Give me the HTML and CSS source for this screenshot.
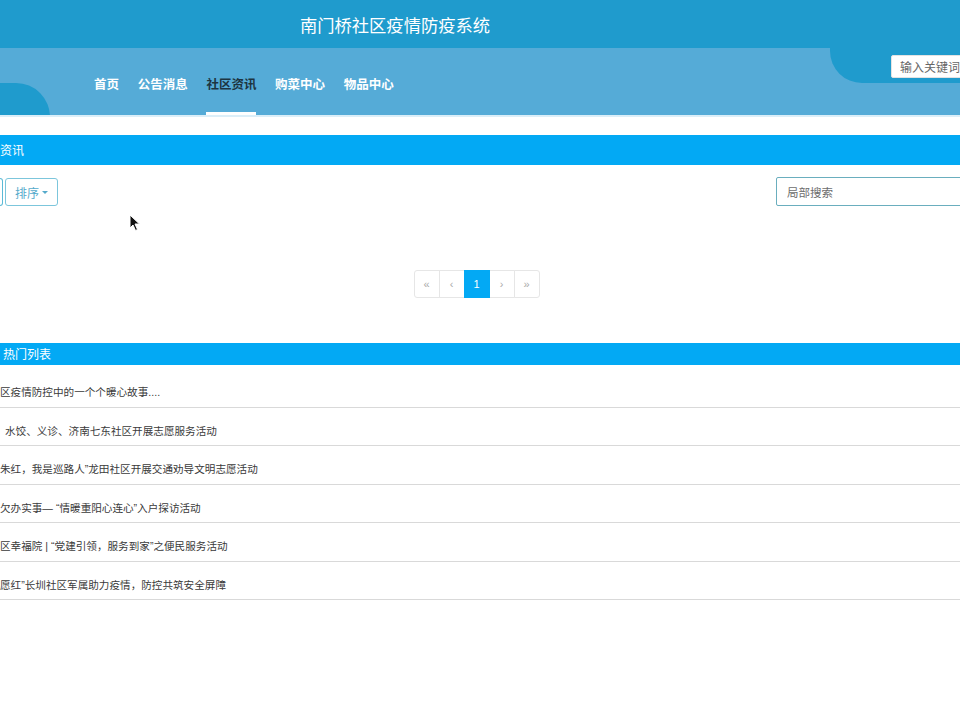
FILE: index.html
```html
<!DOCTYPE html>
<html lang="zh-CN">
<head>
<meta charset="utf-8">
<title>南门桥社区疫情防疫系统</title>
<link rel="stylesheet" href="styles.css">
</head>
<body>
<header class="topbar">
  <h1 class="site-title">南门桥社区疫情防疫系统</h1>
</header>
<nav class="navbar">
  <div class="deco deco-left"></div>
  <div class="deco deco-right">
    <input class="key-search" type="text" placeholder="输入关键词">
  </div>
  <ul class="menu">
    <li class="menu-item">首页</li>
    <li class="menu-item">公告消息</li>
    <li class="menu-item active">社区资讯</li>
    <li class="menu-item">购菜中心</li>
    <li class="menu-item">物品中心</li>
  </ul>
</nav>
<main class="content">
  <div class="section-bar">资讯</div>
  <div class="toolbar">
    <span class="btn-edge"></span>
    <button class="btn-sort">排序<span class="caret"></span></button>
    <input class="local-search" type="text" placeholder="局部搜索">
  </div>
  <div class="pager-wrap">
    <ul class="pager">
      <li class="page">«</li>
      <li class="page">‹</li>
      <li class="page current">1</li>
      <li class="page">›</li>
      <li class="page">»</li>
    </ul>
  </div>
  <div class="hot-bar">热门列表</div>
  <ul class="hot-list">
    <li class="hot-item">区疫情防控中的一个个暖心故事....</li>
    <li class="hot-item indent">水饺、义诊、济南七东社区开展志愿服务活动</li>
    <li class="hot-item">朱红，我是巡路人”龙田社区开展交通劝导文明志愿活动</li>
    <li class="hot-item">欠办实事— “情暖重阳心连心”入户探访活动</li>
    <li class="hot-item">区幸福院 | “党建引领，服务到家”之便民服务活动</li>
    <li class="hot-item">愿红”长圳社区军属助力疫情，防控共筑安全屏障</li>
  </ul>
  <svg class="cursor" width="12" height="18" viewBox="0 0 12 18"><path d="M1 1 L1 14 L4 11 L6.5 16.5 L8.5 15.5 L6 10 L10.5 10 Z" fill="#111" stroke="#fff" stroke-width="1"/></svg>
</main>
</body>
</html>
```
FILE: styles.css
```css
* { box-sizing: border-box; }
html, body { margin: 0; padding: 0; }
body {
  font-family: "Liberation Sans", "Noto Sans CJK SC", sans-serif;
  background: #fff;
  color: #333;
  overflow-x: hidden;
  width: 960px;
  min-height: 720px;
}
.topbar {
  height: 48px;
  background: #1f9bcd;
  display: flex;
  align-items: center;
  justify-content: center;
}
.site-title {
  margin: 0;
  font-size: 17.3px;
  font-weight: normal;
  color: #fff;
  transform: translateX(-85px);
}
.navbar {
  position: relative;
  height: 69px;
  background: #55abd7;
  border-bottom: 2px solid #dbeef8;
  overflow: hidden;
}
.deco { position: absolute; background: #1f9bcd; }
.deco-left {
  left: -20px;
  top: 35px;
  width: 70px;
  height: 40px;
  border-top-right-radius: 34px;
}
.deco-right {
  right: 0;
  top: 0;
  width: 130px;
  height: 35px;
  border-bottom-left-radius: 32px;
  display: flex;
  align-items: flex-start;
  padding-left: 61px;
  padding-top: 7px;
}
.key-search {
  width: 90px;
  height: 23px;
  flex: none;
  border: 1px solid #e3e3e3;
  border-radius: 2px;
  background: #fff;
  padding: 0 8px;
  font-family: "Noto Sans CJK SC", sans-serif;
  font-size: 12px;
  color: #666;
  outline: none;
}
.key-search::placeholder { color: #666; }
.menu {
  position: relative;
  list-style: none;
  margin: 0;
  padding: 0 0 0 94px;
  display: flex;
  height: 67px;
}
.menu-item {
  font-family: "Noto Sans CJK SC", sans-serif;
  font-size: 12.5px;
  font-weight: bold;
  color: #fff;
  margin-right: 18.7px;
  height: 67px;
  line-height: 14px;
  padding-top: 29px;
  white-space: nowrap;
}
.menu-item.active {
  color: #1d3441;
  border-bottom: 3px solid #fff;
}
.content {
  position: relative;
  padding-top: 18px;
}
.section-bar {
  height: 30px;
  background: #03a9f4;
  color: #fff;
  font-family: "Noto Sans CJK SC", sans-serif;
  font-size: 12px;
  line-height: 30px;
}
.toolbar {
  display: flex;
  align-items: flex-start;
  margin-top: 12px;
  height: 30px;
}
.btn-edge {
  width: 3px;
  height: 28px;
  margin-top: 1px;
  border: 1px solid #5bbad6;
  border-left: none;
  border-radius: 0 3px 3px 0;
}
.btn-sort {
  margin-left: 2px;
  margin-top: 1px;
  width: 53px;
  height: 28px;
  border: 1px solid #7cc6dc;
  border-radius: 3px;
  background: #fff;
  color: #55aacb;
  font-family: "Noto Sans CJK SC", sans-serif;
  font-size: 12px;
  padding: 0 0 0 9px;
  display: flex;
  align-items: center;
}
.caret {
  display: inline-block;
  width: 0;
  height: 0;
  margin-left: 3px;
  border-left: 3px solid transparent;
  border-right: 3px solid transparent;
  border-top: 3px solid #55aacb;
}
.local-search {
  margin-left: auto;
  margin-right: -30px;
  width: 214px;
  height: 29px;
  border: 1px solid #6aaebe;
  border-radius: 2px;
  padding: 0 10px;
  font-family: "Noto Sans CJK SC", sans-serif;
  font-size: 11.5px;
  color: #666;
  outline: none;
}
.local-search::placeholder { color: #6d6d6d; }
.pager-wrap {
  display: flex;
  justify-content: center;
  padding-right: 7px;
  margin-top: 63px;
}
.pager {
  list-style: none;
  margin: 0;
  padding: 0;
  display: flex;
}
.page {
  width: 26px;
  height: 28px;
  border: 1px solid #e6e6e6;
  margin-left: -1px;
  display: flex;
  align-items: center;
  justify-content: center;
  font-size: 11px;
  color: #aaa;
  background: #fff;
}
.page:first-child { border-radius: 3px 0 0 3px; margin-left: 0; }
.page:last-child { border-radius: 0 3px 3px 0; }
.page.current {
  background: #03a9f4;
  border-color: #03a9f4;
  color: #fff;
  position: relative;
}
.hot-bar {
  margin-top: 45px;
  height: 22px;
  background: #03a9f4;
  color: #fff;
  font-family: "Noto Sans CJK SC", sans-serif;
  font-size: 12px;
  line-height: 22px;
  padding-left: 3px;
}
.hot-list {
  list-style: none;
  margin: 4px 0 0;
  padding: 0;
}
.hot-item {
  height: 38.5px;
  padding-top: 16px;
  border-bottom: 1px solid #d9d9d9;
  font-family: "Liberation Sans", "Noto Sans CJK SC", sans-serif;
  font-size: 10.6px;
  line-height: 14px;
  color: #3a3a3a;
  white-space: nowrap;
}
.hot-item.indent { padding-left: 5px; }
.cursor {
  position: absolute;
  left: 129px;
  top: 97px;
}
```
